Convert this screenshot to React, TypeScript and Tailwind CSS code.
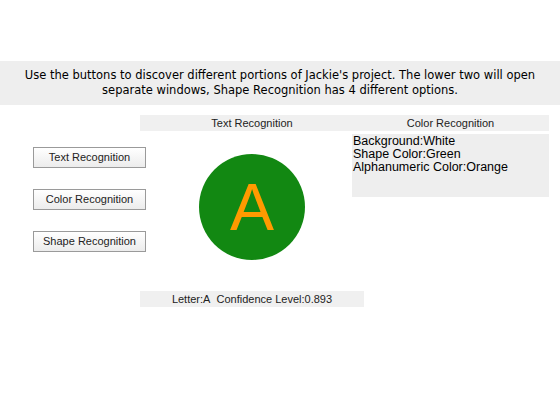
export default function App() {
  const buttons = ["Text Recognition", "Color Recognition", "Shape Recognition"];

  return (
    <div className="h-[420px] w-[560px] overflow-hidden bg-white">
      <div
        className="mt-[61px] flex h-[44px] flex-col items-center justify-center bg-[#eeeeee] pb-[1px] text-[11.5px] leading-[15px] text-black"
        style={{ fontFamily: '"DejaVu Sans", sans-serif' }}
      >
        <p>Use the buttons to discover different portions of Jackie's project. The lower two will open</p>
        <p>separate windows, Shape Recognition has 4 different options.</p>
      </div>

      <div className="flex" style={{ fontFamily: '"Liberation Sans", Arial, sans-serif' }}>
        <div className="ml-[33px] flex w-[113px] shrink-0 flex-col gap-[21px] pt-[42px]">
          {buttons.map((b) => (
            <button
              key={b}
              className="h-[21px] w-[113px] border border-[#9a9a9a] bg-gradient-to-b from-white to-[#ececec] text-[11px] text-[#222]"
            >
              {b}
            </button>
          ))}
        </div>

        <div className="relative z-0 ml-[-6px] flex w-[224px] shrink-0 flex-col items-center pt-[10px]">
          <div className="flex h-[16px] w-full items-center justify-center bg-[#f0f0f0] text-[11px] text-[#222]">
            Text Recognition
          </div>
          <div className="mt-[23px] flex h-[106px] w-[106px] items-center justify-center rounded-full bg-[#128812]">
            <span className="text-[66px] leading-none text-[#ff9a00]">A</span>
          </div>
          <div className="mt-[31px] flex h-[16px] w-full items-center justify-center bg-[#f0f0f0] text-[11px] text-[#222]">
            Letter:A&nbsp;&nbsp;Confidence Level:0.893
          </div>
        </div>

        <div className="relative z-10 ml-[-12px] flex w-[197px] shrink-0 flex-col pt-[10px]">
          <div className="flex h-[16px] w-full items-center justify-center bg-[#f0f0f0] text-[11px] text-[#222]">
            Color Recognition
          </div>
          <div className="mt-[3px] h-[63px] bg-[#eeeeee] px-[1px] pt-[1px] text-[12.5px] leading-[13px] text-black">
            <p>Background:White</p>
            <p>Shape Color:Green</p>
            <p>Alphanumeric Color:Orange</p>
          </div>
        </div>
      </div>
    </div>
  );
}
